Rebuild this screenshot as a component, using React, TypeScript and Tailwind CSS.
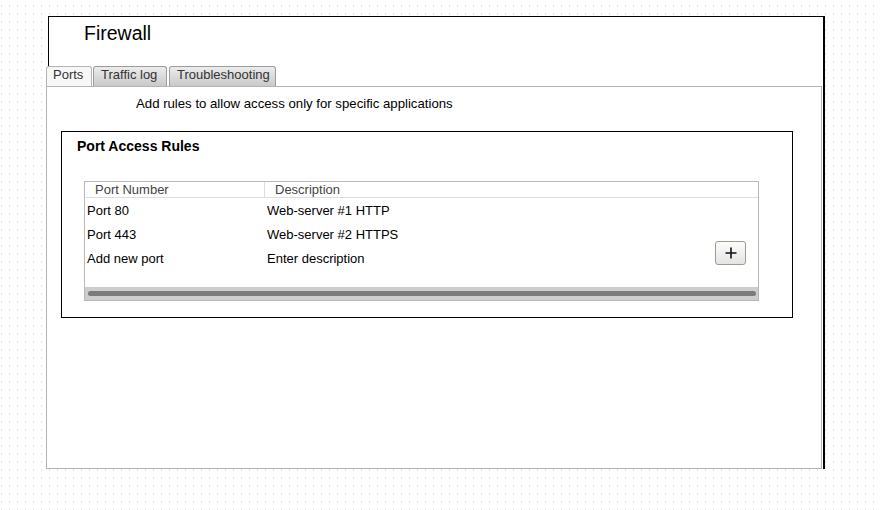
import React from 'react';

const rows = [
  { port: 'Port 80', desc: 'Web-server #1 HTTP' },
  { port: 'Port 443', desc: 'Web-server #2 HTTPS' },
  { port: 'Add new port', desc: 'Enter description' },
];

const App: React.FC = () => {
  return (
    <div className="min-h-[510px] w-full pt-[16px] pl-[48px] font-['Liberation_Sans',Arial,sans-serif] bg-[#e2e2e2] bg-[linear-gradient(to_right,transparent_1px,white_1px),linear-gradient(to_bottom,transparent_2px,white_2px)] bg-[length:8px_8px] bg-[position:1px_5px]">
      <div className="w-[777px] h-[453px] bg-white border-t border-l border-r-2 border-black flex flex-col">
        <div className="h-[49px] pl-[35px] pt-[5px]">
          <h1 className="text-[19.5px] leading-[22px] text-black">Firewall</h1>
        </div>

        <div className="-ml-[3px] w-[776px] flex flex-col">
          <div className="flex h-[20px] items-end">
            <div className="w-[46px] h-[20px] bg-[#f7f7f7] border border-b-0 border-[#b4b4b4] rounded-t-[3px] text-[13px] leading-[16px] text-[#333] pl-[6px]">
              Ports
            </div>
            <div className="ml-[1px] w-[74px] h-[20px] bg-[linear-gradient(to_bottom,#ececec,#c9c9c9)] border border-b-0 border-[#9c9c9c] rounded-t-[3px] text-[13px] leading-[16px] text-[#333] pl-[7px]">
              Traffic log
            </div>
            <div className="ml-[2px] w-[107px] h-[20px] bg-[linear-gradient(to_bottom,#ececec,#c9c9c9)] border border-b-0 border-[#9c9c9c] rounded-t-[3px] text-[13px] leading-[16px] text-[#333] pl-[7px]">
              Troubleshooting
            </div>
          </div>

          <div className="h-[383px] bg-white border border-[#b4b4b4]">
            <p className="pt-[9px] pl-[89px] text-[13.2px] leading-[16px] text-black">
              Add rules to allow access only for specific applications
            </p>

            <div className="mt-[19px] ml-[14px] w-[732px] h-[187px] border border-black">
              <h2 className="pt-[6px] pl-[15px] text-[14px] leading-[16px] font-bold text-black">
                Port Access Rules
              </h2>

              <div className="mt-[27px] ml-[22px] w-[675px] h-[120px] border border-[#b8b8b8] flex flex-col">
                <div className="flex h-[16px] border-b border-[#dedede] text-[13px] leading-[15px] text-[#444]">
                  <div className="w-[180px] border-r border-[#dedede] pl-[10px]">Port Number</div>
                  <div className="pl-[10px]">Description</div>
                </div>

                <div className="flex h-[89px]">
                  <div className="flex-1 pt-[1px]">
                    {rows.map((r) => (
                      <div key={r.port} className="flex h-[24px] items-center text-[13px] text-black">
                        <div className="w-[180px] pl-[2px]">{r.port}</div>
                        <div className="pl-[2px]">{r.desc}</div>
                      </div>
                    ))}
                  </div>
                  <div className="pt-[43px] pr-[12px]">
                    <button className="w-[31px] h-[24px] flex items-center justify-center rounded-[3px] border border-[#a39a8e] bg-[linear-gradient(to_bottom,#fdfdfd,#e4e4e4)]">
                      <svg width="12" height="12" viewBox="0 0 12 12">
                        <path d="M6 0.5V11.5M0.5 6H11.5" stroke="#111" strokeWidth="1.6" />
                      </svg>
                    </button>
                  </div>
                </div>

                <div className="h-[13px] bg-[#cdcdcd] pt-[4px] pl-[3px] pr-[2px]">
                  <div className="h-[5px] rounded-full bg-[#7b7b7b]" />
                </div>
              </div>
            </div>
          </div>
        </div>
      </div>
    </div>
  );
};

export default App;
